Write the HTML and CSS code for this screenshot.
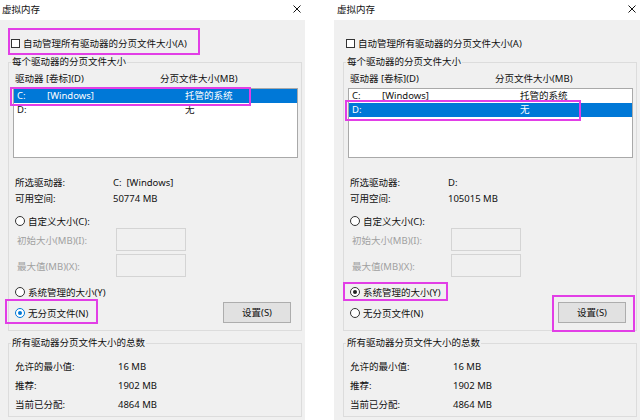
FILE: index.html
```html
<!DOCTYPE html>
<html lang="zh-CN">
<head>
    <meta charset="UTF-8">
    <title>虚拟内存</title>
    <link rel="stylesheet" href="styles.css">
</head>
<body>
    <div class="screens">
        <!-- 左: C 盘, 无分页文件 -->
        <div class="dialog">
            <div class="titlebar">
                <span>虚拟内存</span>
                <svg class="close" viewBox="0 0 8 8"><path d="M0.5 0.5L7.5 7.5M7.5 0.5L0.5 7.5" stroke="#111" stroke-width="1"/></svg>
            </div>
            <div class="panel">
                <div class="auto-row hl hl-auto">
                    <span class="check"></span>
                    <span>自动管理所有驱动器的分页文件大小(A)</span>
                </div>
                <fieldset class="group">
                    <legend>每个驱动器的分页文件大小</legend>
                    <div class="cols">
                        <span>驱动器 [卷标](D)</span>
                        <span>分页文件大小(MB)</span>
                    </div>
                    <div class="list">
                        <div class="list-row sel hl hl-c">
                            <span>C:</span><span>[Windows]</span><span>托管的系统</span>
                        </div>
                        <div class="list-row">
                            <span>D:</span><span></span><span>无</span>
                        </div>
                    </div>
                    <div class="info">
                        <div class="info-row"><span>所选驱动器:</span><span>C:&nbsp; [Windows]</span></div>
                        <div class="info-row"><span>可用空间:</span><span>50774 MB</span></div>
                    </div>
                    <div class="radio-row custom">
                        <span class="radio"><span class="dot"></span>自定义大小(C):</span>
                    </div>
                    <div class="size-row"><span>初始大小(MB)(I):</span><span class="size-box"></span></div>
                    <div class="size-row"><span>最大值(MB)(X):</span><span class="size-box"></span></div>
                    <div class="radio-row sys">
                        <span class="radio"><span class="dot"></span>系统管理的大小(Y)</span>
                    </div>
                    <div class="last-row">
                        <span class="radio hl hl-none"><span class="dot on focus"></span>无分页文件(N)</span>
                        <span class="btn">设置(S)</span>
                    </div>
                </fieldset>
                <fieldset class="group totals">
                    <legend>所有驱动器分页文件大小的总数</legend>
                    <div class="total-row"><span>允许的最小值:</span><span>16 MB</span></div>
                    <div class="total-row"><span>推荐:</span><span>1902 MB</span></div>
                    <div class="total-row"><span>当前已分配:</span><span>4864 MB</span></div>
                </fieldset>
            </div>
        </div>

        <!-- 右: D 盘, 系统管理的大小 -->
        <div class="dialog">
            <div class="titlebar">
                <span>虚拟内存</span>
                <svg class="close" viewBox="0 0 8 8"><path d="M0.5 0.5L7.5 7.5M7.5 0.5L0.5 7.5" stroke="#111" stroke-width="1"/></svg>
            </div>
            <div class="panel">
                <div class="auto-row">
                    <span class="check"></span>
                    <span>自动管理所有驱动器的分页文件大小(A)</span>
                </div>
                <fieldset class="group">
                    <legend>每个驱动器的分页文件大小</legend>
                    <div class="cols">
                        <span>驱动器 [卷标](D)</span>
                        <span>分页文件大小(MB)</span>
                    </div>
                    <div class="list">
                        <div class="list-row">
                            <span>C:</span><span>[Windows]</span><span>托管的系统</span>
                        </div>
                        <div class="list-row sel hl hl-d">
                            <span>D:</span><span></span><span>无</span>
                        </div>
                    </div>
                    <div class="info">
                        <div class="info-row"><span>所选驱动器:</span><span>D:</span></div>
                        <div class="info-row"><span>可用空间:</span><span>105015 MB</span></div>
                    </div>
                    <div class="radio-row custom">
                        <span class="radio"><span class="dot"></span>自定义大小(C):</span>
                    </div>
                    <div class="size-row"><span>初始大小(MB)(I):</span><span class="size-box"></span></div>
                    <div class="size-row"><span>最大值(MB)(X):</span><span class="size-box"></span></div>
                    <div class="radio-row sys">
                        <span class="radio hl hl-sys"><span class="dot on"></span>系统管理的大小(Y)</span>
                    </div>
                    <div class="last-row">
                        <span class="radio"><span class="dot"></span>无分页文件(N)</span>
                        <span class="btn hl hl-btn">设置(S)</span>
                    </div>
                </fieldset>
                <fieldset class="group totals">
                    <legend>所有驱动器分页文件大小的总数</legend>
                    <div class="total-row"><span>允许的最小值:</span><span>16 MB</span></div>
                    <div class="total-row"><span>推荐:</span><span>1902 MB</span></div>
                    <div class="total-row"><span>当前已分配:</span><span>4864 MB</span></div>
                </fieldset>
            </div>
        </div>
    </div>
</body>
</html>
```

FILE: styles.css
```css
body {
    margin: 0;
    background: #fff;
    font-family: "Noto Sans", "Noto Sans CJK SC", sans-serif;
    font-size: 9.5px;
    color: #111;
    overflow: hidden;
}
.screens {
    display: flex;
    gap: 29px;
    margin-left: -1px;
}
.dialog {
    width: 306px;
    height: 420px;
    flex: none;
    display: flex;
    flex-direction: column;
}
.titlebar {
    height: 20px;
    box-sizing: border-box;
    display: flex;
    align-items: center;
    padding: 0 4px 2px 3px;
    background: #fff;
}
.close {
    margin-left: auto;
    width: 8px;
    height: 8px;
}
.panel {
    flex: 1;
    background: #f0f0f0;
    padding-top: 15px;
}
.auto-row {
    display: flex;
    align-items: center;
    gap: 3px;
    width: fit-content;
    height: 16px;
    margin-left: 12px;
}
.check {
    width: 9px;
    height: 9px;
    box-sizing: border-box;
    border: 1px solid #333;
    background: #fff;
}
.group {
    margin: 5px 3px 0 9px;
    padding: 4px 3px 7px 4px;
    border: 1px solid #dcdcdc;
    min-width: 0;
}
.group legend {
    padding: 0 1px;
    margin-left: -2px;
    line-height: 12px;
}
.cols {
    display: grid;
    grid-template-columns: 145px 1fr;
    padding-left: 2px;
    height: 14px;
    line-height: 14px;
}
.list {
    margin-top: 2px;
    height: 70px;
    box-sizing: border-box;
    border: 1px solid #a9a9a9;
    background: #fff;
}
.list-row {
    display: grid;
    grid-template-columns: 30px 138px 1fr;
    padding-left: 3px;
    height: 14px;
    line-height: 14px;
}
.list-row.sel {
    background: #0078d7;
    color: #fff;
}
.info {
    margin-top: 17px;
}
.info-row {
    display: grid;
    grid-template-columns: 98px 1fr;
    padding-left: 2px;
    height: 16px;
    line-height: 16px;
}
.radio-row {
    display: flex;
    align-items: center;
    padding-left: 2px;
    height: 14px;
}
.radio-row.custom {
    margin-top: 7px;
}
.radio-row.sys {
    margin-top: 8px;
}
.radio {
    display: inline-flex;
    align-items: center;
    gap: 3px;
}
.dot {
    width: 10px;
    height: 10px;
    box-sizing: border-box;
    border: 1px solid #333;
    border-radius: 50%;
    background: #fff;
    display: grid;
    place-items: center;
}
.dot.on::after {
    content: "";
    width: 4px;
    height: 4px;
    border-radius: 50%;
    background: #222;
}
.dot.focus {
    border-color: #0078d7;
}
.dot.focus::after {
    background: #0078d7;
}
.size-row {
    display: grid;
    grid-template-columns: 99px 70px;
    align-items: center;
    padding-left: 4px;
    height: 23px;
    color: #a0a0a0;
}
.size-row + .size-row {
    margin-top: 3px;
}
.size-box {
    height: 23px;
    box-sizing: border-box;
    border: 1px solid #d4d4d4;
    background: #f0f0f0;
}
.last-row {
    display: grid;
    grid-template-columns: 208px 68px;
    margin-top: 3px;
    padding-left: 2px;
    height: 21px;
}
.btn {
    box-sizing: border-box;
    height: 21px;
    border: 1px solid #adadad;
    background: #e1e1e1;
    text-align: center;
    line-height: 19px;
}
.group.totals {
    margin-top: 6px;
    padding: 8px 3px 2px 4px;
}
.total-row {
    display: grid;
    grid-template-columns: 103px 1fr;
    padding-left: 2px;
    height: 19px;
    line-height: 19px;
}

/* 标注框 */
.hl {
    position: relative;
}
.hl::before {
    content: "";
    position: absolute;
    box-sizing: border-box;
    border: 2px solid #e23ee6;
}
.hl-auto::before { left: -3px; top: -7px; width: 192px; height: 27px; }
.hl-c::before { left: -4px; top: -2px; width: 241px; height: 19px; }
.hl-d::before { left: -4px; top: -3px; width: 236px; height: 21px; }
.hl-none::before { left: -10px; top: -3px; width: 93px; height: 25px; }
.hl-sys::before { left: -7px; top: -3px; width: 105px; height: 19px; }
.hl-btn::before { left: -7px; top: -8px; width: 83px; height: 37px; }
```
